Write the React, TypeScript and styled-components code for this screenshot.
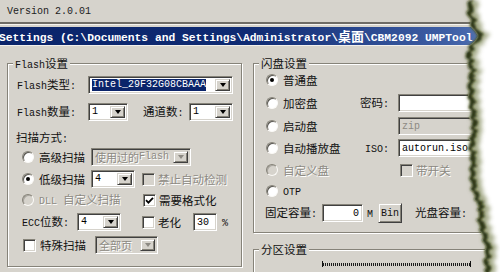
import React from 'react';
import styled, { createGlobalStyle, css } from 'styled-components';

const FACE = '#d6d3cc';
const DARK = '#404040';
const SHADE = '#868379';
const GREY_TEXT = '#8d8a83';

const GlobalStyle = createGlobalStyle`
  html, body { margin: 0; padding: 0; background: #fff; }
  body { width: 500px; height: 272px; overflow: hidden; }
`;

const Screen = styled.div`
  position: relative;
  width: 500px;
  height: 272px;
  overflow: hidden;
  background: ${FACE};
  color: #111;
  font-family: "Noto Sans CJK SC", sans-serif;
  font-size: 11.5px;
`;

const VersionBar = styled.div`
  height: 22px;
  padding-left: 7px;
  display: flex;
  align-items: center;
  font-family: "Liberation Mono", monospace;
  font-size: 10px;
  color: #222;
`;

const Rule = styled.div`
  height: 2px;
  background: #6e6b65;
  border-bottom: 1px solid #f6f4f0;
  margin-bottom: 2px;
`;

const TitleBar = styled.div`
  height: 18px;
  line-height: 18px;
  text-indent: -1px;
  background: linear-gradient(90deg, #0a246a 0%, #0f2b73 50%, #3f5fa5 90%, #5a7bbd 100%);
  color: #fff;
  font-family: "Liberation Mono", monospace;
  font-weight: bold;
  font-size: 11.3px;
  white-space: nowrap;
  overflow: hidden;
  border-bottom: 1px solid #f2f0ec;
`;

const TitleCjk = styled.span`
  font-family: "Noto Sans CJK SC", sans-serif;
  font-size: 13px;
`;

const Body = styled.div`
  display: flex;
  align-items: flex-start;
  padding: 11px 0 0 7px;
  gap: 11px;
`;

const Column = styled.div`
  display: flex;
  flex-direction: column;
  gap: 10px;
`;

const Group = styled.fieldset<{ $w: number; $h: number }>`
  box-sizing: border-box;
  width: ${p => p.$w}px;
  height: ${p => p.$h}px;
  margin: 0;
  padding: 0;
  min-width: 0;
  border: 1px solid ${SHADE};
  box-shadow: inset 1px 1px 0 #fff, 1px 1px 0 #fff;
`;

const Legend = styled.legend`
  margin-left: 5px;
  padding: 0 2px;
  height: 12px;
  line-height: 12px;
  background: ${FACE};
`;

const Row = styled.div<{ $mt?: number; $pl?: number; $h?: number }>`
  display: flex;
  align-items: center;
  height: ${p => p.$h ?? 18}px;
  margin-top: ${p => p.$mt ?? 0}px;
  padding-left: ${p => p.$pl ?? 0}px;
  white-space: nowrap;
`;

const Lat = styled.span`
  font-family: "Liberation Mono", monospace;
  font-size: 10px;
`;

const Label = styled.span<{ $w?: number; $ml?: number; $off?: boolean }>`
  flex: none;
  display: inline-block;
  width: ${p => (p.$w ? `${p.$w}px` : 'auto')};
  margin-left: ${p => p.$ml ?? 0}px;
  line-height: 14px;
  color: ${p => (p.$off ? GREY_TEXT : '#111')};
  text-shadow: ${p => (p.$off ? '1px 1px 0 #fff' : 'none')};
`;

const sunken = css`
  box-sizing: border-box;
  border: 1px solid;
  border-color: ${SHADE} #fff #fff ${SHADE};
  box-shadow: inset 1px 1px 0 ${DARK}, inset -1px -1px 0 ${FACE};
`;

const raised = css`
  box-sizing: border-box;
  border: 1px solid;
  border-color: ${FACE} ${DARK} ${DARK} ${FACE};
  box-shadow: inset 1px 1px 0 #fff, inset -1px -1px 0 ${SHADE};
  background: ${FACE};
`;

const ComboBox = styled.div<{ $w: number; $off?: boolean }>`
  ${sunken};
  flex: none;
  width: ${p => p.$w}px;
  height: 18px;
  padding: 2px;
  display: flex;
  align-items: stretch;
  background: ${p => (p.$off ? FACE : '#fff')};
`;

const ComboText = styled.div<{ $off?: boolean }>`
  flex: 1;
  min-width: 0;
  display: flex;
  align-items: center;
  padding-left: 1px;
  white-space: nowrap;
  font-size: 11px;
  line-height: 12px;
  color: ${p => (p.$off ? GREY_TEXT : '#000')};
  text-shadow: ${p => (p.$off ? '1px 1px 0 #fff' : 'none')};
`;

const Sel = styled.span`
  background: #0a246a;
  color: #fff;
  font-family: "Liberation Mono", monospace;
  font-size: 10px;
  line-height: 12px;
`;

const DropBtn = styled.div<{ $off?: boolean }>`
  ${raised};
  flex: none;
  width: 15px;
  display: flex;
  align-items: center;
  justify-content: center;

  &::after {
    content: '';
    border-left: 3.5px solid transparent;
    border-right: 3.5px solid transparent;
    border-top: 4px solid ${p => (p.$off ? GREY_TEXT : '#000')};
  }
`;

const Radio = styled.span<{ $on?: boolean; $off?: boolean }>`
  flex: none;
  box-sizing: border-box;
  width: 12px;
  height: 12px;
  border-radius: 50%;
  border: 1px solid;
  border-color: ${SHADE} #fbfaf7 #fbfaf7 ${SHADE};
  box-shadow: inset 1px 1px 0 ${p => (p.$off ? '#a9a69f' : '#5a5852')};
  background: ${p => (p.$off ? FACE : '#fff')};
  display: flex;
  align-items: center;
  justify-content: center;

  &::after {
    content: '';
    display: ${p => (p.$on ? 'block' : 'none')};
    width: 4px;
    height: 4px;
    border-radius: 50%;
    background: #000;
  }
`;

const CheckBox = styled.span<{ $ml?: number; $off?: boolean }>`
  ${sunken};
  flex: none;
  width: 13px;
  height: 13px;
  margin-left: ${p => p.$ml ?? 0}px;
  background: ${p => (p.$off ? FACE : '#fff')};
  display: flex;
  align-items: center;
  justify-content: center;
`;

const TextBox = styled.div<{ $w: number; $off?: boolean; $right?: boolean }>`
  ${sunken};
  flex: none;
  width: ${p => p.$w}px;
  height: 18px;
  padding: 0 3px;
  display: flex;
  align-items: center;
  justify-content: ${p => (p.$right ? 'flex-end' : 'flex-start')};
  background: ${p => (p.$off ? FACE : '#fff')};
  color: ${p => (p.$off ? GREY_TEXT : '#000')};
  font-family: "Liberation Mono", monospace;
  font-size: 10px;
  overflow: hidden;
`;

const PushButton = styled.div<{ $ml?: number }>`
  ${raised};
  flex: none;
  width: 24px;
  height: 20px;
  margin-left: ${p => p.$ml ?? 0}px;
  display: flex;
  align-items: center;
  justify-content: center;
  font-family: "Liberation Mono", monospace;
  font-size: 10px;
`;

const Ticks = styled.div`
  box-sizing: border-box;
  width: 149px;
  height: 6px;
  border-left: 1px solid #111;
  border-right: 1px solid #111;
  background: repeating-linear-gradient(90deg, #1c1c1c 0 1px, transparent 1px 2px) center / 100% 3px no-repeat;
`;

const TearSvg = styled.svg`
  position: absolute;
  top: 0;
  left: 450px;
`;

function Mixed({ s }: { s: string }) {
  return (
    <>
      {s
        .split(/([\x20-\x7e]+)/)
        .filter(Boolean)
        .map((part, i) =>
          /^[\x20-\x7e]+$/.test(part) ? <Lat key={i}>{part}</Lat> : <React.Fragment key={i}>{part}</React.Fragment>
        )}
    </>
  );
}

function Check({ on, off, ml }: { on?: boolean; off?: boolean; ml?: number }) {
  return (
    <CheckBox $off={off} $ml={ml}>
      {on && (
        <svg width="9" height="9" viewBox="0 0 9 9">
          <path d="M1 4.2 L3.4 6.6 L8 1.8" stroke="#000" strokeWidth="1.8" fill="none" />
        </svg>
      )}
    </CheckBox>
  );
}

function Combo({ w, off, children }: { w: number; off?: boolean; children: React.ReactNode }) {
  return (
    <ComboBox $w={w} $off={off}>
      <ComboText $off={off}>{children}</ComboText>
      <DropBtn $off={off} />
    </ComboBox>
  );
}

// torn paper edge on the right
const EDGE: [number, number][] = [
  [0, 469], [12, 467], [22, 471], [27, 471], [31, 475], [36, 478], [41, 475], [45, 470],
  [55, 466], [70, 470], [85, 468], [100, 469], [115, 471], [130, 472], [145, 469],
  [160, 471], [175, 470], [190, 472], [200, 476], [210, 479], [222, 478], [235, 482],
  [250, 486], [262, 484], [274, 486],
];
const OX = 450;

const edgeAt = (y: number) => {
  for (let i = 1; i < EDGE.length; i++) {
    const [y0, x0] = EDGE[i - 1];
    const [y1, x1] = EDGE[i];
    if (y <= y1) return x0 + ((x1 - x0) * (y - y0)) / (y1 - y0);
  }
  return EDGE[EDGE.length - 1][1];
};

const noise = (y: number, s: number) =>
  Math.sin(y * 1.9 + s) * 0.9 + Math.sin(y * 0.61 + s * 2.3) * 1.2 + Math.sin(y * 4.3 + s * 0.7) * 0.5;

const ys = Array.from({ length: 138 }, (_, i) => i * 2);
const inner = ys.map(y => [edgeAt(y) + (y > 26 && y < 46 ? 0 : noise(y, 1)) - OX, y]);
const darkEdge = inner.map(([x, y]) => [x + 3.5 + 1.5 * Math.abs(noise(y * 0.7, 4)), y]);
const wideEdge = inner.map(([x, y]) => [x + 8 + 2.5 * Math.abs(noise(y * 0.5, 7)), y]);

const pts = (a: number[][]) => a.map(p => `${p[0].toFixed(1)},${p[1]}`).join(' L');
const toRight = (a: number[][]) => `M${pts(a)} L60,276 L60,-2 Z`;
const band = (a: number[][], b: number[][]) => `M${pts(a)} L${pts([...b].reverse())} Z`;

function Tear() {
  return (
    <TearSvg width="50" height="272" viewBox="0 0 50 272">
      <defs>
        <filter id="soft" x="-50%" y="-10%" width="200%" height="120%">
          <feGaussianBlur stdDeviation="2.2" />
        </filter>
        <filter id="tight" x="-50%" y="-10%" width="200%" height="120%">
          <feGaussianBlur stdDeviation="0.9" />
        </filter>
      </defs>
      <path d={toRight(inner)} fill="#fff" />
      <path d={band(inner, wideEdge)} fill="#7f8756" opacity="0.7" filter="url(#soft)" />
      <path d={band(inner, darkEdge)} fill="#2f3812" filter="url(#tight)" />
    </TearSvg>
  );
}

export default function App() {
  return (
    <Screen>
      <GlobalStyle />
      <VersionBar>Version 2.0.01</VersionBar>
      <Rule />
      <TitleBar>
        Settings (C:\Documents and Settings\Administrator\<TitleCjk>桌面</TitleCjk>\CBM2092 UMPTool
      </TitleBar>

      <Body>
        <Group $w={235} $h={210}>
          <Legend><Mixed s="Flash设置" /></Legend>
          <Row $mt={7} $pl={9}>
            <Label $w={71}><Mixed s="Flash类型:" /></Label>
            <Combo w={145}><Sel>Intel_29F32G08CBAAA</Sel></Combo>
          </Row>
          <Row $mt={9} $pl={9}>
            <Label $w={71}><Mixed s="Flash数量:" /></Label>
            <Combo w={40}><Lat>1</Lat></Combo>
            <Label $ml={15} $w={46}><Mixed s="通道数:" /></Label>
            <Combo w={44}><Lat>1</Lat></Combo>
          </Row>
          <Row $mt={8} $pl={8}>
            <Label><Mixed s="扫描方式:" /></Label>
          </Row>
          <Row $mt={1} $pl={14}>
            <Radio />
            <Label $ml={5} $w={52}>高级扫描</Label>
            <Combo w={100} off><Mixed s="使用过的Flash" /></Combo>
          </Row>
          <Row $mt={4} $pl={14}>
            <Radio $on />
            <Label $ml={5} $w={52}>低级扫描</Label>
            <Combo w={44}><Lat>4</Lat></Combo>
            <Check ml={7} off />
            <Label $ml={3} $off>禁止自动检测</Label>
          </Row>
          <Row $mt={3} $pl={14}>
            <Radio $off />
            <Label $ml={5} $w={104} $off><Mixed s="DLL 自定义扫描" /></Label>
            <Check on />
            <Label $ml={3}>需要格式化</Label>
          </Row>
          <Row $mt={4} $pl={14}>
            <Label $w={55}><Mixed s="ECC位数:" /></Label>
            <Combo w={44}><Lat>4</Lat></Combo>
            <Check ml={21} />
            <Label $ml={3} $w={35}>老化</Label>
            <TextBox $w={24}>30</TextBox>
            <Label $ml={5}><Lat>%</Lat></Label>
          </Row>
          <Row $mt={5} $pl={15}>
            <Check />
            <Label $ml={4} $w={55}>特殊扫描</Label>
            <Combo w={63} off>全部页</Combo>
          </Row>
        </Group>

        <Column>
          <Group $w={245} $h={176}>
            <Legend>闪盘设置</Legend>
            <Row $mt={2} $pl={12}>
              <Radio $on />
              <Label $ml={5}>普通盘</Label>
            </Row>
            <Row $mt={5} $pl={12}>
              <Radio />
              <Label $ml={5} $w={77}>加密盘</Label>
              <Label $w={38}><Mixed s="密码:" /></Label>
              <TextBox $w={100} />
            </Row>
            <Row $mt={5} $pl={12}>
              <Radio />
              <Label $ml={5} $w={115}>启动盘</Label>
              <TextBox $w={100} $off>zip</TextBox>
            </Row>
            <Row $mt={4} $pl={12}>
              <Radio />
              <Label $ml={5} $w={82}>自动播放盘</Label>
              <Label $w={33}><Lat>ISO:</Lat></Label>
              <TextBox $w={100}>autorun.iso</TextBox>
            </Row>
            <Row $mt={4} $pl={12}>
              <Radio $off />
              <Label $ml={5} $w={117} $off>自定义盘</Label>
              <Check off />
              <Label $ml={3} $off>带开关</Label>
            </Row>
            <Row $mt={3} $pl={12}>
              <Radio />
              <Label $ml={5}><Lat>OTP</Lat></Label>
            </Row>
            <Row $mt={4} $pl={11}>
              <Label $w={57}><Mixed s="固定容量:" /></Label>
              <TextBox $w={41} $right>0</TextBox>
              <Label $ml={4}><Lat>M</Lat></Label>
              <PushButton $ml={5}>Bin</PushButton>
              <Label $ml={13}><Mixed s="光盘容量:" /></Label>
            </Row>
          </Group>

          <Group $w={245} $h={60}>
            <Legend>分区设置</Legend>
            <Row $mt={6} $h={6} $pl={68}>
              <Ticks />
            </Row>
            <Row $mt={1} $h={14} $pl={9}>
              <Label $w={35}><Lat>4096</Lat></Label>
              <Label><Lat>M</Lat></Label>
            </Row>
          </Group>
        </Column>
      </Body>

      <Tear />
    </Screen>
  );
}
